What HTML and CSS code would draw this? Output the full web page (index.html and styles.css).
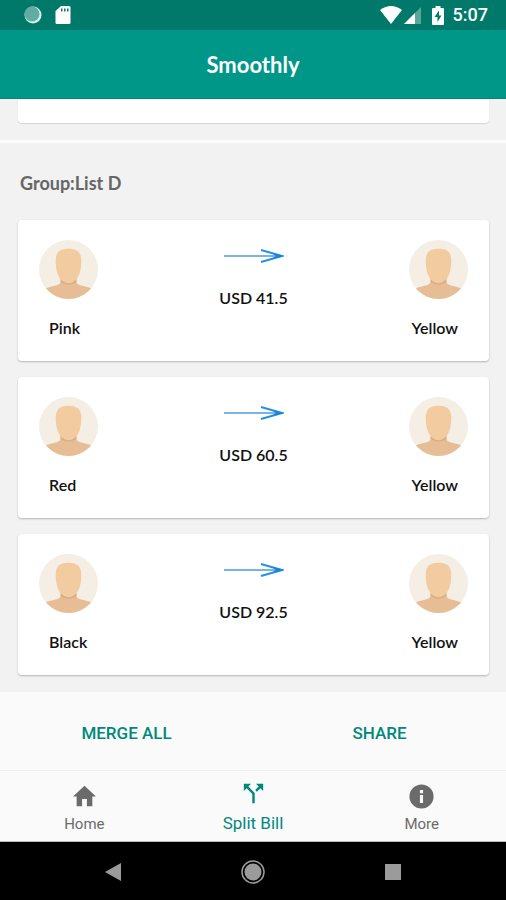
FILE: index.html
```html
<!DOCTYPE html>
<html lang="en">
<head>
    <meta charset="UTF-8">
    <meta name="viewport" content="width=device-width, initial-scale=1.0">
    <title>Smoothly</title>
    <link rel="stylesheet" href="styles.css">
</head>
<body>
    <!-- Shared avatar and arrow drawings -->
    <svg class="symbols" aria-hidden="true">
        <symbol id="avatar" viewBox="0 0 60 60">
            <clipPath id="avatar-clip"><circle cx="30" cy="30" r="30"/></clipPath>
            <g clip-path="url(#avatar-clip)">
                <rect width="60" height="60" fill="#f4eee5"/>
                <path d="M22 38h16v4q0 3 4 4l8 2q5 1 7 7v5H3v-5q2-6 7-7l8-2q4-1 4-4z" fill="#e6bd94"/>
                <path d="M22 39h16v4q-8 5-16 0z" fill="#d9ae85"/>
                <path d="M17 21C17 12 22 9 30 9s13 3 13 12c0 9-2 15-5 19q-8 8-16 0c-3-4-5-10-5-19z" fill="#f2cba0"/>
            </g>
        </symbol>
        <symbol id="arrow" viewBox="0 0 60 16">
            <path d="M0 8h52" fill="none" stroke="#4a9be0" stroke-width="1.5"/>
            <path d="M37 2l21 6-21 6" fill="none" stroke="#2a8fdc" stroke-width="2"/>
            <path d="M48 5l12 3-12 3 4-3z" fill="#1783d6"/>
        </symbol>
    </svg>

    <div class="status-bar">
        <div class="status-group">
            <svg width="18" height="18" viewBox="0 0 18 18"><circle cx="9" cy="9" r="8.500" fill="#d9efec"/><circle cx="8" cy="8" r="7.500" fill="#62ada3"/></svg>
            <svg width="16" height="20" viewBox="0 0 16 20"><path d="M6 1h8q1.500 0 1.500 1.500v15q0 1.500-1.500 1.500H2q-1.500 0-1.500-1.500V6z" fill="#fff"/><path d="M6 3.500h1.500v3H6zM9 3.500h1.500v3H9zM12 3.500h1.500v3H12z" fill="#00796b"/></svg>
        </div>
        <div class="status-group status-right">
            <svg width="22" height="18" viewBox="0 0 22 18"><path d="M0 4Q11-4 22 4L11 18z" fill="#fff"/></svg>
            <svg width="17" height="17" viewBox="0 0 17 17"><path d="M17 0v17H0z" fill="#58a69c"/><path d="M11 6v11H0z" fill="#fff"/></svg>
            <svg class="battery" width="12" height="19" viewBox="0 0 12 19"><path d="M3.500 0h5v2H11q1 0 1 1v15q0 1-1 1H1q-1 0-1-1V3q0-1 1-1h2.500z" fill="#fff"/><path d="M7 4.500L2.500 11H5.500v5L9.500 9.500H7z" fill="#00796b"/></svg>
            <span class="clock">5:07</span>
        </div>
    </div>

    <header class="app-bar">
        <h1>Smoothly</h1>
    </header>

    <main class="content">
        <div class="card card-end"></div>
        <section class="group">
            <h2>Group:List D</h2>
            <ul class="transfers">
                <li class="card">
                    <div class="person">
                        <svg class="avatar"><use href="#avatar"/></svg>
                        <span>Pink</span>
                    </div>
                    <div class="amount">
                        <svg class="arrow"><use href="#arrow"/></svg>
                        <span>USD 41.5</span>
                    </div>
                    <div class="person person-to">
                        <svg class="avatar"><use href="#avatar"/></svg>
                        <span>Yellow</span>
                    </div>
                </li>
                <li class="card">
                    <div class="person">
                        <svg class="avatar"><use href="#avatar"/></svg>
                        <span>Red</span>
                    </div>
                    <div class="amount">
                        <svg class="arrow"><use href="#arrow"/></svg>
                        <span>USD 60.5</span>
                    </div>
                    <div class="person person-to">
                        <svg class="avatar"><use href="#avatar"/></svg>
                        <span>Yellow</span>
                    </div>
                </li>
                <li class="card">
                    <div class="person">
                        <svg class="avatar"><use href="#avatar"/></svg>
                        <span>Black</span>
                    </div>
                    <div class="amount">
                        <svg class="arrow"><use href="#arrow"/></svg>
                        <span>USD 92.5</span>
                    </div>
                    <div class="person person-to">
                        <svg class="avatar"><use href="#avatar"/></svg>
                        <span>Yellow</span>
                    </div>
                </li>
            </ul>
        </section>
    </main>

    <div class="actions">
        <button type="button">MERGE ALL</button>
        <button type="button">SHARE</button>
    </div>

    <nav class="tabs">
        <a href="#home">
            <svg viewBox="0 0 24 24"><path d="M10 20v-6h4v6h4.500v-8h3L12 3 2.500 12h3v8z"/></svg>
            <span>Home</span>
        </a>
        <a href="#split" class="active">
            <svg viewBox="0 0 24 24"><path d="M14 4l2.290 2.290-2.880 2.880 1.420 1.420 2.880-2.880L20 10V4zM10 4H4v6l2.290-2.290 4.710 4.700V20h2v-8.410l-5.290-5.300z"/></svg>
            <span>Split Bill</span>
        </a>
        <a href="#more">
            <svg viewBox="0 0 24 24"><path d="M12 2a10 10 0 1 0 0 20 10 10 0 0 0 0-20zm1.300 15.300h-2.600v-6.600h2.600zm0-8h-2.600V6.700h2.600z"/></svg>
            <span>More</span>
        </a>
    </nav>

    <div class="system-nav">
        <button type="button" aria-label="Back"><svg viewBox="0 0 24 24"><path d="M4 12L20 3v18z" fill="#9b9b9b"/></svg></button>
        <button type="button" aria-label="Home"><svg viewBox="0 0 24 24"><circle cx="12" cy="12" r="11" fill="none" stroke="#9b9b9b" stroke-width="1.500"/><circle cx="12" cy="12" r="8.500" fill="#9b9b9b"/></svg></button>
        <button type="button" aria-label="Recent apps"><svg viewBox="0 0 24 24"><path d="M4 4h16v16H4z" fill="#9b9b9b"/></svg></button>
    </div>
</body>
</html>
```
FILE: styles.css
```css
* {
    box-sizing: border-box;
}

body {
    display: flex;
    flex-direction: column;
    min-height: 100vh;
    margin: 0;
    background-color: #f2f2f2;
    font-family: Lato, sans-serif;
}

svg {
    display: block;
    flex-shrink: 0;
}

.symbols {
    position: absolute;
    width: 0;
    height: 0;
}

/* Top bars */
.status-bar {
    display: flex;
    justify-content: space-between;
    align-items: center;
    height: 30px;
    padding: 0 18px 0 24px;
    background-color: #00796b;
}

.status-group {
    display: flex;
    align-items: center;
    gap: 13px;
}

.status-right {
    gap: 2px;
}

.battery {
    margin: 0 7px 0 9px;
}

.clock {
    color: white;
    font: 500 18px/30px Roboto, sans-serif;
}

.app-bar {
    display: flex;
    justify-content: center;
    align-items: center;
    height: 69px;
    padding-top: 2px;
    background-color: #009688;
    border-bottom: 1px solid #00897b;
}

h1 {
    margin: 0;
    color: white;
    font-size: 22px;
    line-height: 32px;
}

/* Transfer list */
.content {
    flex: 1;
}

.card {
    display: flex;
    justify-content: space-between;
    margin: 0 17px 0 18px;
    padding: 20px 21px 21px;
    background-color: white;
    border-radius: 4px;
    box-shadow: 0 1px 2px rgba(0, 0, 0, 0.25);
}

.card-end {
    height: 24px;
    padding: 0;
    border-radius: 0 0 4px 4px;
    box-shadow: 0 1px 1px rgba(0, 0, 0, 0.12);
}

.group {
    margin-top: 17px;
    padding-bottom: 17px;
    border-top: 3px solid #fcfcfc;
}

h2 {
    margin: 0;
    padding: 28px 20px 25px;
    color: #666;
    font-size: 18px;
    line-height: 24px;
}

.transfers {
    display: flex;
    flex-direction: column;
    gap: 16px;
    margin: 0;
    padding: 0;
    list-style: none;
}

.person,
.amount {
    display: flex;
    flex-direction: column;
    color: #111;
    font-size: 16px;
    font-weight: 600;
    line-height: 24px;
}

.person {
    flex: 1;
    gap: 17px;
}

.person span {
    padding: 0 10px;
}

.person-to {
    align-items: flex-end;
}

.avatar {
    width: 59px;
    height: 59px;
}

.amount {
    align-items: center;
    gap: 22px;
    padding-top: 8px;
}

.arrow {
    width: 60px;
    height: 16px;
}

/* Bottom actions and tabs */
.actions {
    display: flex;
    height: 79px;
    background-color: #fafafa;
    border-bottom: 1px solid #eee;
}

.actions button {
    flex: 1;
    padding: 3px 0 0;
    border: none;
    background: none;
    color: #00897b;
    font: 500 17px/24px Roboto, sans-serif;
    cursor: pointer;
}

.tabs {
    display: flex;
    height: 71px;
    background-color: #fafafa;
    border-bottom: 1px solid #bbb;
}

.tabs a {
    display: flex;
    flex: 1;
    flex-direction: column;
    align-items: center;
    gap: 3px;
    padding-top: 11px;
    color: #6b6b6b;
    font: 15px/20px Roboto, sans-serif;
    text-decoration: none;
}

.tabs svg {
    width: 29px;
    height: 29px;
    fill: currentColor;
}

.tabs .active {
    gap: 5px;
    padding-top: 8px;
    color: #00897b;
    font-size: 17px;
}

/* System navigation */
.system-nav {
    display: flex;
    justify-content: center;
    align-items: center;
    gap: 116px;
    height: 59px;
    background-color: black;
}

.system-nav button {
    padding: 0;
    border: none;
    background: none;
}

.system-nav svg {
    width: 24px;
    height: 24px;
}
```
